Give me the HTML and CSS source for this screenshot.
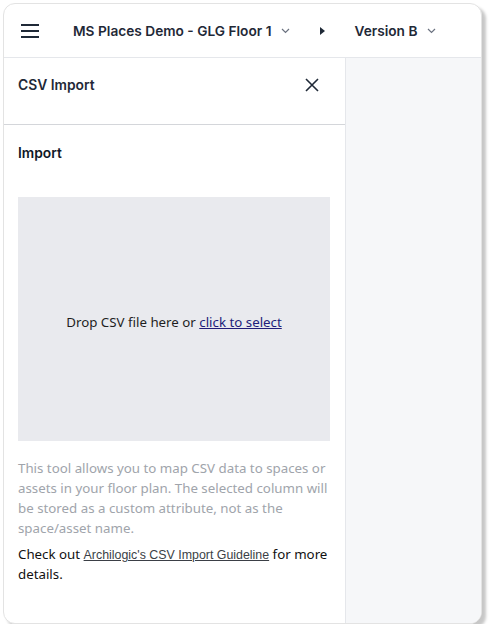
FILE: index.html
```html
<!DOCTYPE html>
<html lang="en">
<head>
  <meta charset="UTF-8" />
  <meta name="viewport" content="width=device-width, initial-scale=1.0"/>
  <title>CSV Import</title>
  <link rel="stylesheet" href="styles.css">
</head>
<body>

  <div class="frame">

    <!-- Top bar -->
    <div class="topbar">
      <svg class="menu-icon" width="18" height="14" viewBox="0 0 18 14">
        <path d="M0 1h18M0 7h18M0 13h18" stroke="#1f2937" stroke-width="1.8" fill="none"/>
      </svg>
      <div class="crumb">MS Places Demo - GLG Floor 1</div>
      <svg class="chev" width="9" height="6" viewBox="0 0 9 6">
        <path d="M1 1l3.5 3.5L8 1" stroke="#6b7280" stroke-width="1.2" fill="none"/>
      </svg>
      <svg class="caret" width="5" height="8" viewBox="0 0 5 8">
        <path d="M0 0l5 4-5 4z" fill="#1f2937"/>
      </svg>
      <div class="crumb">Version B</div>
      <svg class="chev" width="9" height="6" viewBox="0 0 9 6">
        <path d="M1 1l3.5 3.5L8 1" stroke="#6b7280" stroke-width="1.2" fill="none"/>
      </svg>
    </div>

    <div class="main">
      <!-- Side panel -->
      <div class="panel">
        <div class="panel-head">
          <span>CSV Import</span>
          <svg class="close" width="14" height="14" viewBox="0 0 14 14">
            <path d="M1 1l12 12M13 1L1 13" stroke="#1f2937" stroke-width="1.6" fill="none"/>
          </svg>
        </div>

        <div class="panel-body">
          <h2>Import</h2>
          <div class="dropzone">
            <span>Drop CSV file here or <a href="#">click to select</a></span>
          </div>
          <p class="hint">This tool allows you to map CSV data to spaces or assets in your floor plan. The selected column will be stored as a custom attribute, not as the space/asset name.</p>
          <p class="more">Check out <a href="#">Archilogic's CSV Import Guideline</a> for more details.</p>
        </div>
      </div>

      <!-- Floor plan area -->
      <div class="canvas"></div>
    </div>

  </div>

</body>
</html>
```

FILE: styles.css
```css
body {
  margin: 0;
  background-color: #ffffff;
  font-family: 'Noto Sans', sans-serif;
}

.frame {
  margin: 3px 0 0 3px;
  width: 477px;
  height: 619px;
  border: 1px solid #e3e3e3;
  border-radius: 12px;
  box-shadow: 4px 4px 3px rgba(0,0,0,0.22);
  overflow: hidden;
  display: flex;
  flex-direction: column;
  background-color: #ffffff;
}

.topbar {
  height: 53px;
  flex-shrink: 0;
  border-bottom: 1px solid #e5e7eb;
  display: flex;
  align-items: center;
  padding-left: 17px;
}

.menu-icon {
  margin-right: 34px;
}

.crumb {
  font-family: 'Inter', sans-serif;
  font-size: 13.7px;
  font-weight: 600;
  color: #1f2937;
}

.chev {
  margin-left: 10px;
  margin-top: 1px;
}

.caret {
  margin-left: 30px;
  margin-right: 29px;
}

.main {
  flex: 1;
  display: flex;
}

.panel {
  width: 341px;
  border-right: 1px solid #e5e7eb;
  display: flex;
  flex-direction: column;
}

.panel-head {
  height: 67px;
  box-sizing: border-box;
  border-bottom: 1px solid #d4d6da;
  display: flex;
  align-items: flex-start;
  justify-content: space-between;
  padding: 18px 26px 0 14px;
  font-family: 'Inter', sans-serif;
  font-size: 13.8px;
  line-height: 18px;
  font-weight: 600;
  color: #1f2937;
}

.close {
  margin-top: 2px;
}

.panel-body {
  padding: 20px 15px 0 14px;
}

h2 {
  margin: 0;
  font-family: 'Inter', sans-serif;
  font-size: 13.8px;
  font-weight: 600;
  color: #111827;
  line-height: 16px;
}

.dropzone {
  margin-top: 36px;
  height: 244px;
  box-sizing: border-box;
  padding-top: 5px;
  background-color: #e9eaee;
  display: flex;
  align-items: center;
  justify-content: center;
  font-size: 13.3px;
  color: #1f1f1f;
}

.dropzone a {
  color: #211d7a;
}

.hint {
  margin: 17px 0 0 0;
  font-size: 13.3px;
  line-height: 20px;
  color: #a0a4ab;
}

.more {
  margin: 6px 0 0 0;
  font-size: 13.3px;
  line-height: 20px;
  color: #111111;
}

.more a {
  font-family: 'Liberation Sans', sans-serif;
  font-size: 12.4px;
  line-height: 16px;
  color: #3b3f46;
}

.canvas {
  flex: 1;
  background-color: #f6f7f9;
}
```
